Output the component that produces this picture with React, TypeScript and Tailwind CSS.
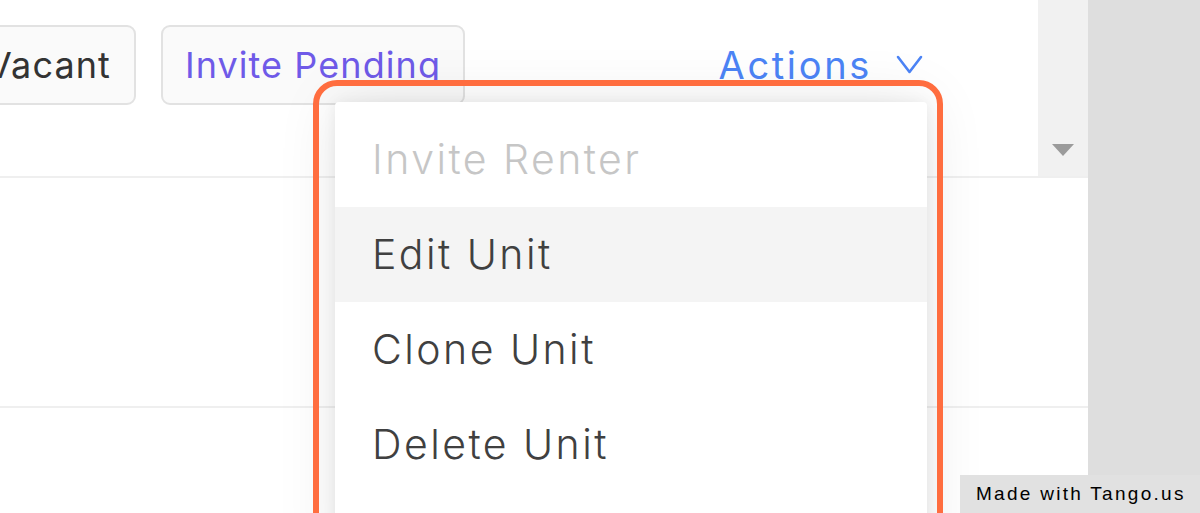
import React from 'react';

const menuItems = [
  { label: 'Invite Renter', disabled: true },
  { label: 'Edit Unit', active: true },
  { label: 'Clone Unit' },
  { label: 'Delete Unit' },
];

const App: React.FC = () => {
  return (
    <div className="relative flex h-[513px] w-[1200px] overflow-hidden bg-white font-['Inter',sans-serif]">
      {/* page content */}
      <div className="flex flex-1 flex-col">
        <div className="flex h-[178px] border-b-2 border-[#efefef]">
          <div className="flex flex-1 items-start pt-[25px]">
            <button className="ml-[-38px] flex h-[80px] items-center rounded-[9px] border-2 border-[#e2e2e2] bg-[#fafafa] px-[23px] text-[36px] tracking-[0.03em] text-[#333]">
              Vacant
            </button>
            <button className="ml-[25px] flex h-[80px] items-center rounded-[9px] border-2 border-[#e2e2e2] bg-[#fafafa] pl-[22px] pr-[22px] text-[36px] tracking-[0.03em] text-[#6f5ae8]">
              Invite Pending
            </button>
            <button className="ml-auto mr-[115px] flex h-[80px] items-center gap-[24px] text-[38px] tracking-[0.07em] text-[#4c84f6]">
              Actions
              <svg width="27" height="20" viewBox="0 0 27 20" fill="none">
                <polyline points="2,2 13.5,17 25,2" stroke="#4c84f6" strokeWidth="2.6" strokeLinecap="round" strokeLinejoin="round" />
              </svg>
            </button>
          </div>
          <div className="flex w-[50px] justify-center bg-[#f1f1f1] pt-[144px]">
            <svg width="22" height="12" viewBox="0 0 22 12">
              <polygon points="0,0 22,0 11,12" fill="#9b9b9b" />
            </svg>
          </div>
        </div>
        <div className="h-[230px] border-b-2 border-[#efefef]" />
        <div className="flex-1" />
      </div>
      <div className="w-[112px] bg-[#dedede]" />

      {/* dropdown menu */}
      <div className="absolute left-[335px] top-[102px] h-[460px] w-[592px] rounded-[4px] bg-white py-[10px] shadow-[0_0_60px_rgba(0,0,0,0.10),0_0_14px_rgba(0,0,0,0.06)]">
        {menuItems.map((item) => (
          <div
            key={item.label}
            className={`flex h-[95px] items-center pl-[37px] text-[41px] font-light tracking-[0.06em] ${
              item.disabled ? 'text-[#c6c6c6]' : 'text-[#404040]'
            } ${item.active ? 'bg-[#f4f4f4]' : ''}`}
          >
            {item.label}
          </div>
        ))}
      </div>

      {/* highlight frame */}
      <div className="absolute left-[313px] top-[80px] h-[520px] w-[630px] rounded-[24px] border-[6px] border-[#ff6d3f]" />

      {/* watermark */}
      <div className="absolute bottom-0 right-0 flex h-[38px] w-[240px] items-center bg-[#e1e1e1] pl-[16px] font-['Liberation_Sans',sans-serif] text-[19px] tracking-[0.12em] text-black">
        Made with Tango.us
      </div>
    </div>
  );
};

export default App;
